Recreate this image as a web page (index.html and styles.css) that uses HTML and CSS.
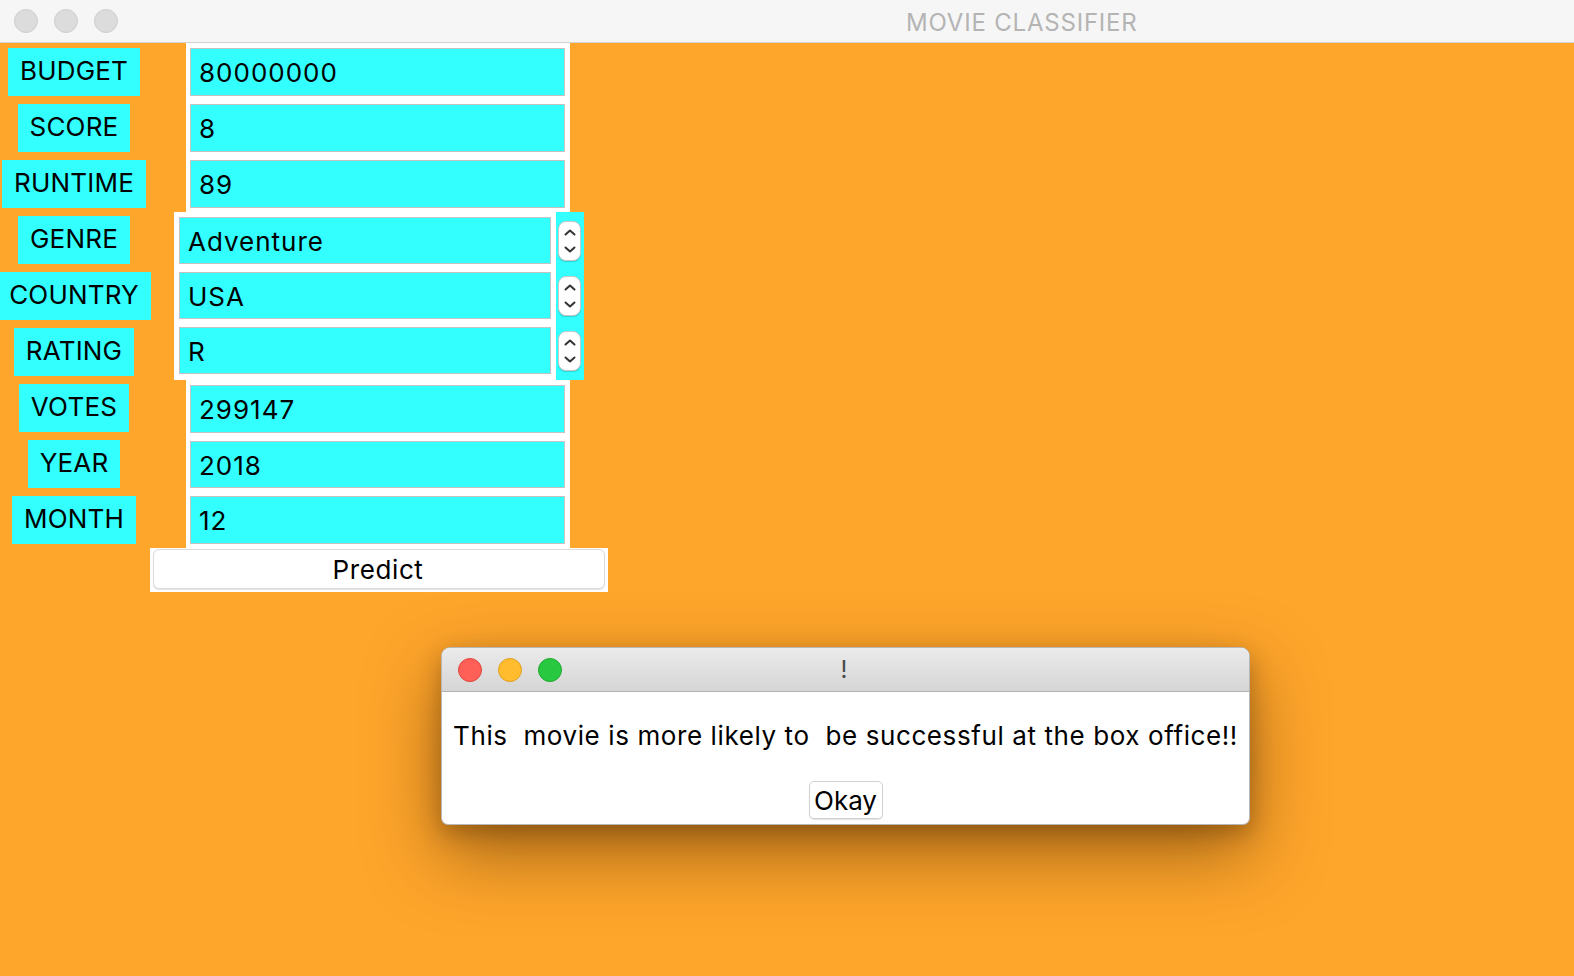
FILE: index.html
```html
<!DOCTYPE html>
<html lang="en">
<head>
<meta charset="utf-8">
<title>MOVIE CLASSIFIER</title>
<link rel="stylesheet" href="styles.css">
</head>
<body>
<div class="window">
  <div class="titlebar">
    <div class="lights">
      <span class="light gray"></span>
      <span class="light gray"></span>
      <span class="light gray"></span>
    </div>
    <div class="title">MOVIE CLASSIFIER</div>
  </div>

  <div class="content">
    <div class="section sec-a">
      <div class="labels">
        <div class="label">BUDGET</div>
        <div class="label">SCORE</div>
        <div class="label">RUNTIME</div>
      </div>
      <div class="panel panel-a">
        <div class="field">80000000</div>
        <div class="field">8</div>
        <div class="field">89</div>
      </div>
    </div>

    <div class="section sec-b">
      <div class="labels">
        <div class="label">GENRE</div>
        <div class="label">COUNTRY</div>
        <div class="label">RATING</div>
      </div>
      <div class="panel panel-b">
        <div class="field">Adventure</div>
        <div class="field">USA</div>
        <div class="field">R</div>
      </div>
      <div class="spinners">
        <div class="spin-cell"><div class="spinner">
          <svg width="14" height="30" viewBox="0 0 14 30"><path d="M2.5 8.5 L7 4.5 L11.5 8.5" fill="none" stroke="#333" stroke-width="2" stroke-linecap="round" stroke-linejoin="round"/><path d="M2.5 21.5 L7 25.5 L11.5 21.5" fill="none" stroke="#333" stroke-width="2" stroke-linecap="round" stroke-linejoin="round"/></svg>
        </div></div>
        <div class="spin-cell"><div class="spinner">
          <svg width="14" height="30" viewBox="0 0 14 30"><path d="M2.5 8.5 L7 4.5 L11.5 8.5" fill="none" stroke="#333" stroke-width="2" stroke-linecap="round" stroke-linejoin="round"/><path d="M2.5 21.5 L7 25.5 L11.5 21.5" fill="none" stroke="#333" stroke-width="2" stroke-linecap="round" stroke-linejoin="round"/></svg>
        </div></div>
        <div class="spin-cell"><div class="spinner">
          <svg width="14" height="30" viewBox="0 0 14 30"><path d="M2.5 8.5 L7 4.5 L11.5 8.5" fill="none" stroke="#333" stroke-width="2" stroke-linecap="round" stroke-linejoin="round"/><path d="M2.5 21.5 L7 25.5 L11.5 21.5" fill="none" stroke="#333" stroke-width="2" stroke-linecap="round" stroke-linejoin="round"/></svg>
        </div></div>
      </div>
    </div>

    <div class="section sec-c">
      <div class="labels">
        <div class="label">VOTES</div>
        <div class="label">YEAR</div>
        <div class="label">MONTH</div>
      </div>
      <div class="panel panel-a">
        <div class="field">299147</div>
        <div class="field">2018</div>
        <div class="field">12</div>
      </div>
    </div>

    <div class="predict-row">
      <div class="predict-panel">
        <div class="predict">Predict</div>
      </div>
    </div>
  </div>

  <div class="dialog">
    <div class="dlg-titlebar">
      <div class="lights dlg-lights">
        <span class="light red"></span>
        <span class="light yellow"></span>
        <span class="light green"></span>
      </div>
      <div class="dlg-title">!</div>
    </div>
    <div class="dlg-body">
      <div class="dlg-text">This&nbsp; movie is more likely to&nbsp; be successful at the box office!!</div>
      <div class="okay">Okay</div>
    </div>
  </div>
</div>
</body>
</html>
```

FILE: styles.css
```css
* { box-sizing: border-box; }

html, body {
  margin: 0;
  padding: 0;
  width: 1574px;
  height: 976px;
  overflow: hidden;
}

body {
  font-family: "Inter", "Helvetica Neue", "Liberation Sans", sans-serif;
  color: #000;
}

.window {
  position: relative;
  width: 1574px;
  height: 976px;
  background: #fea52b;
}

.titlebar {
  height: 43px;
  background: #f6f6f6;
  border-bottom: 1px solid #d3d3d3;
  display: flex;
  align-items: center;
}

.lights {
  display: flex;
  gap: 16px;
  padding-left: 14px;
}

.light {
  width: 24px;
  height: 24px;
  border-radius: 50%;
  display: block;
}

.light.gray { background: #dcdcdc; border: 1px solid #cfcfcf; }
.light.red { background: #fe5f57; border: 1px solid #e2463f; }
.light.yellow { background: #febc2e; border: 1px solid #dfa023; }
.light.green { background: #28c840; border: 1px solid #1eaa30; }

.title {
  margin-left: 788px;
  font-size: 24px;
  color: #b4b4b4;
  letter-spacing: 0.8px;
  padding-top: 2px;
}

.content {
  display: flex;
  flex-direction: column;
}

.section {
  display: flex;
  height: 168px;
}

.sec-a { height: 169px; }

.labels {
  width: 148px;
  display: flex;
  flex-direction: column;
  align-items: center;
  gap: 8px;
  padding-top: 4px;
}

.sec-a .labels { padding-top: 5px; }

.label {
  height: 48px;
  padding: 0 12px 4px 12px;
  background: #33ffff;
  font-size: 26px;
  letter-spacing: 0.2px;
  display: flex;
  align-items: center;
  justify-content: center;
  white-space: nowrap;
  flex-shrink: 0;
}

.panel {
  background: #fff;
  display: flex;
  flex-direction: column;
  gap: 8px;
  padding: 5px 5px 4px 4px;
}

.panel-a {
  margin-left: 38px;
  width: 384px;
}

.panel-b {
  margin-left: 26px;
  width: 382px;
  padding-left: 5px;
}

.field {
  height: 47px;
  background: #33ffff;
  border: 1px solid #c4c4c4;
  font-size: 26px;
  display: flex;
  align-items: center;
  padding: 1px 0 0 8px;
  letter-spacing: 1px;
}

.sec-a .field, .sec-c .field { height: 48px; }

.spinners {
  width: 28px;
  background: #33ffff;
  display: flex;
  flex-direction: column;
  gap: 8px;
  padding: 5px 0 4px 2px;
}

.spin-cell {
  height: 47px;
  display: flex;
  align-items: center;
}

.spinner {
  width: 23px;
  height: 40px;
  background: #fff;
  border: 1px solid #c8c8c8;
  border-radius: 8px;
  box-shadow: 0 1px 1px rgba(0, 0, 0, 0.18);
  display: flex;
  align-items: center;
  justify-content: center;
}

.predict-row {
  display: flex;
  padding-left: 150px;
}

.predict-panel {
  width: 458px;
  height: 44px;
  background: #fff;
  padding: 1px 3px 3px 3px;
}

.predict {
  height: 40px;
  border: 1px solid #dcdcdc;
  border-radius: 6px;
  background: #fff;
  box-shadow: 0 1px 1px rgba(0, 0, 0, 0.12);
  font-size: 26px;
  display: flex;
  align-items: center;
  justify-content: center;
  padding-top: 1px;
  padding-right: 2px;
  letter-spacing: 0.6px;
}

.dialog {
  position: absolute;
  left: 441px;
  top: 647px;
  width: 809px;
  height: 178px;
  background: #fff;
  border-radius: 9px 9px 7px 7px;
  border: 1px solid rgba(0, 0, 0, 0.28);
  box-shadow: 0 28px 70px rgba(70, 35, 0, 0.5), 0 8px 22px rgba(70, 35, 0, 0.3);
  overflow: hidden;
  display: flex;
  flex-direction: column;
}

.dlg-titlebar {
  height: 44px;
  background: linear-gradient(#ebebeb, #d5d5d5);
  border-bottom: 1px solid #b2b2b2;
  display: flex;
  align-items: center;
  position: relative;
  flex-shrink: 0;
}

.dlg-lights {
  padding-left: 16px;
}

.dlg-title {
  position: absolute;
  left: 0;
  right: 0;
  text-align: center;
  font-size: 24px;
  color: #4a4a4a;
  padding-right: 3px;
}

.dlg-body {
  flex: 1;
  display: flex;
  flex-direction: column;
  align-items: center;
  padding-top: 28px;
}

.dlg-text {
  font-size: 26px;
  letter-spacing: 0.6px;
  white-space: nowrap;
  line-height: 32px;
}

.okay {
  margin-top: 29px;
  width: 74px;
  height: 38px;
  border: 1px solid #d2d2d2;
  border-radius: 5px;
  box-shadow: 0 1px 1px rgba(0, 0, 0, 0.12);
  font-size: 26px;
  display: flex;
  align-items: center;
  justify-content: center;
  padding-top: 1px;
}
```
